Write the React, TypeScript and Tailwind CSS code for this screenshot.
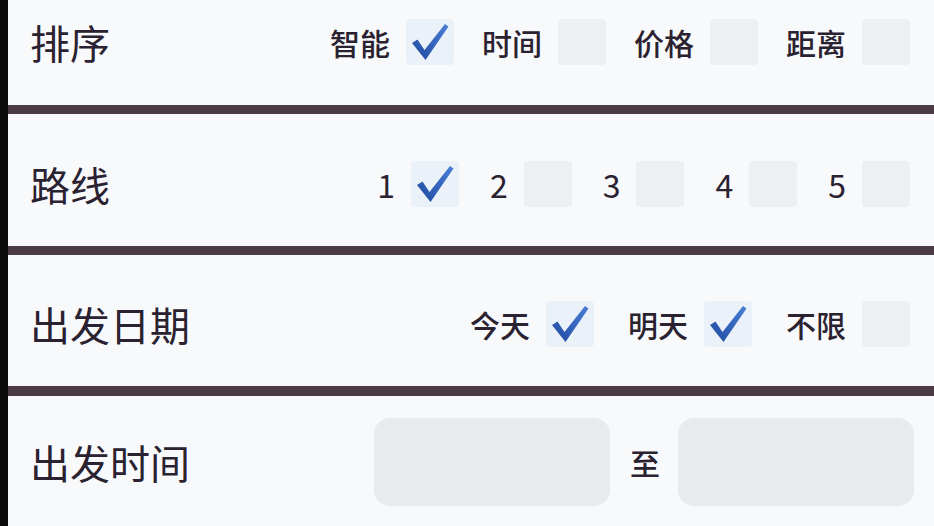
import React from "react";

const FONT = { fontFamily: '"Noto Sans CJK SC", "Noto Sans", sans-serif' };

function Check() {
  return (
    <svg viewBox="0 0 40 40" className="h-[40px] w-[40px]">
      <defs>
        <linearGradient id="ck" x1="0" y1="1" x2="1" y2="0">
          <stop offset="0" stopColor="#1f4aa0" />
          <stop offset="1" stopColor="#4a7fd6" />
        </linearGradient>
      </defs>
      <path d="M2 21 L7.5 17.5 L14.5 28 L35 2 L38.5 4.5 L15.5 38 Z" fill="url(#ck)" />
    </svg>
  );
}

function Box({ checked }: { checked?: boolean }) {
  return (
    <div
      className={
        "flex h-[46px] w-[48px] items-center justify-center rounded-[4px] " +
        (checked ? "bg-[#ebf1f9]" : "bg-[#edeff2]")
      }
    >
      {checked ? <Check /> : null}
    </div>
  );
}

function Opt({ label, checked, digit }: { label: string; checked?: boolean; digit?: boolean }) {
  return (
    <div className="flex items-center gap-[16px]">
      <span
        className={
          "leading-none text-[#2a2230] " + (digit ? "text-[32px]" : "text-[30px] font-medium")
        }
      >
        {label}
      </span>
      <Box checked={checked} />
    </div>
  );
}

function Divider() {
  return <div className="h-[9px] w-full bg-[#4a3b43]" />;
}

export default function App() {
  return (
    <div className="flex h-[526px] w-[934px] overflow-hidden bg-[#0b0b0b]" style={FONT}>
      <div className="w-[8px] shrink-0 bg-[#0b0b0b]" />
      <div className="flex flex-1 flex-col bg-[#f8f9fb]">
        {/* Row 1 */}
        <div className="flex h-[105px] items-center justify-between pb-[21px] pl-[22px] pr-[24px]">
          <span className="text-[40px] leading-none text-[#2a2230]">排序</span>
          <div className="flex items-center gap-[28px]">
            <Opt label="智能" checked />
            <Opt label="时间" />
            <Opt label="价格" />
            <Opt label="距离" />
          </div>
        </div>
        <Divider />
        {/* Row 2 */}
        <div className="flex h-[132px] items-center justify-between pt-[8px] pl-[22px] pr-[24px]">
          <span className="text-[40px] leading-none text-[#2a2230]">路线</span>
          <div className="flex items-center gap-[31px]">
            <Opt label="1" checked digit />
            <Opt label="2" digit />
            <Opt label="3" digit />
            <Opt label="4" digit />
            <Opt label="5" digit />
          </div>
        </div>
        <Divider />
        {/* Row 3 */}
        <div className="flex h-[131px] items-center justify-between pt-[7px] pl-[22px] pr-[24px]">
          <span className="text-[40px] leading-none text-[#2a2230]">出发日期</span>
          <div className="flex items-center gap-[34px]">
            <Opt label="今天" checked />
            <Opt label="明天" checked />
            <Opt label="不限" />
          </div>
        </div>
        <div className="h-[10px] w-full bg-[#4a3b43]" />
        {/* Row 4 */}
        <div className="flex h-[130px] items-center justify-between pt-[22px] pb-[20px] pl-[22px] pr-[20px]">
          <span className="text-[40px] leading-none text-[#2a2230]">出发时间</span>
          <div className="flex items-center">
            <div className="h-[88px] w-[236px] rounded-[16px] bg-[#e9eaed]" />
            <span className="ml-[20px] mr-[18px] text-[30px] font-medium leading-none text-[#2a2230]">至</span>
            <div className="h-[88px] w-[236px] rounded-[16px] bg-[#e9eaed]" />
          </div>
        </div>
      </div>
    </div>
  );
}
